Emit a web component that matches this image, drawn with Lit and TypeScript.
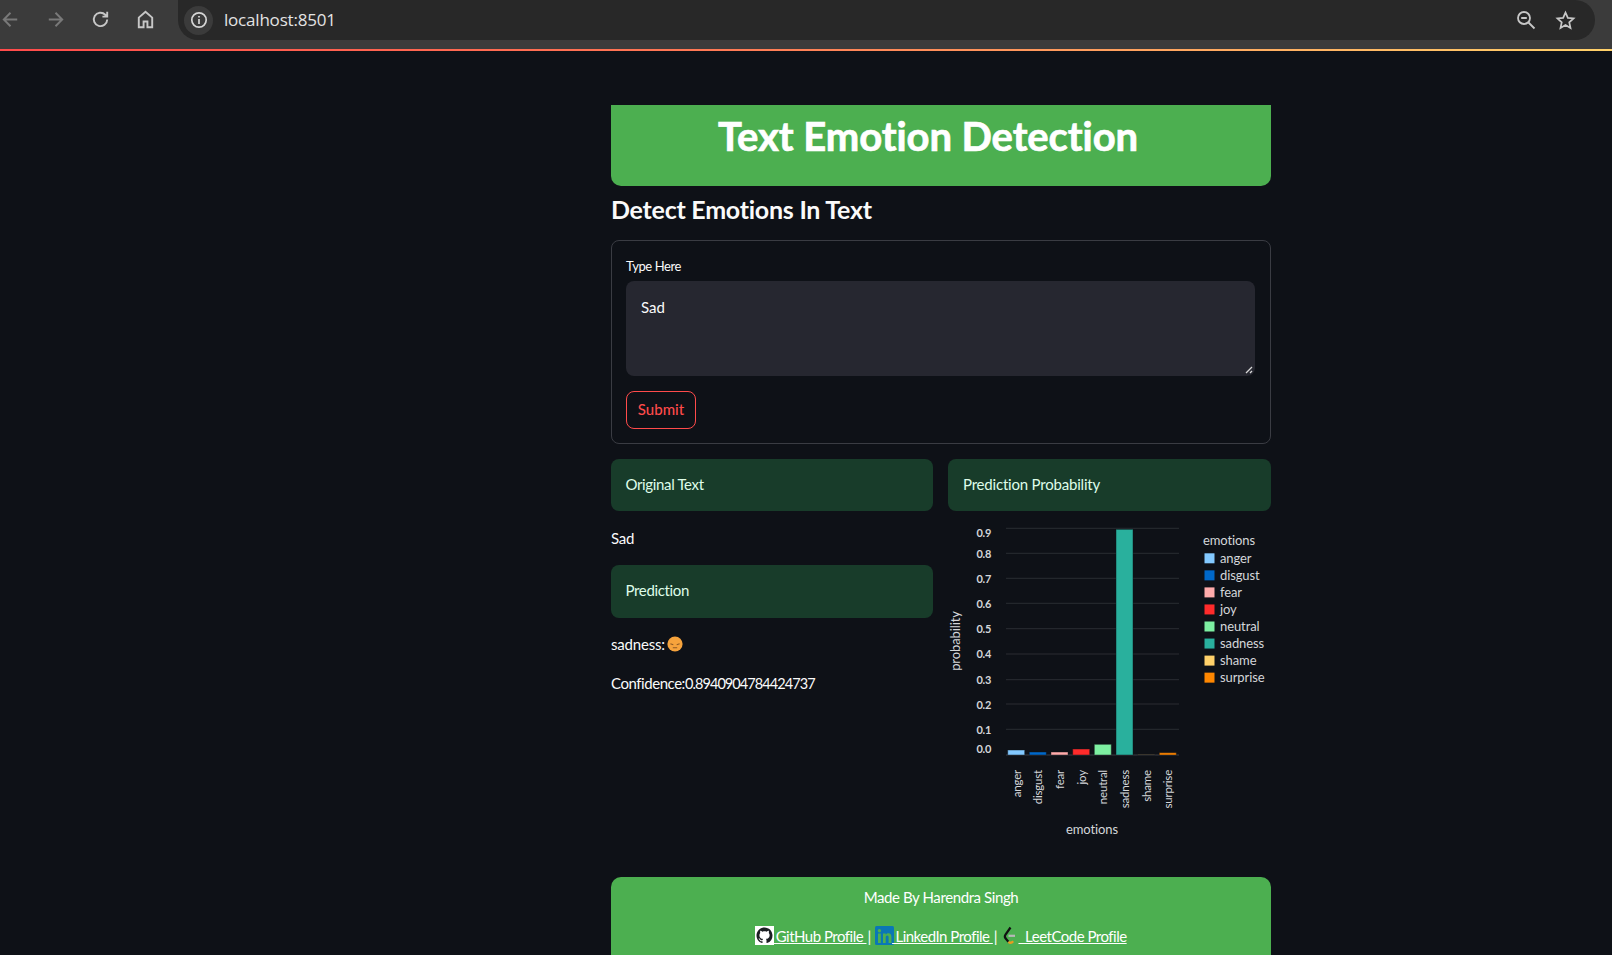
import { LitElement, css, html, svg } from "lit";
import { customElement } from "lit/decorators.js";

const bars = [
  { name: "anger", color: "#83c9ff", x: 1007.7, top: 750 },
  { name: "disgust", color: "#0068c9", x: 1029.3, top: 752 },
  { name: "fear", color: "#ffabab", x: 1051, top: 752 },
  { name: "joy", color: "#ff2b2b", x: 1072.7, top: 749 },
  { name: "neutral", color: "#7defa1", x: 1094.3, top: 744.3 },
  { name: "sadness", color: "#29b09d", x: 1116, top: 529.3 },
  { name: "shame", color: "#ffd16a", x: 1137.7, top: 754.8 },
  { name: "surprise", color: "#ff8700", x: 1159.3, top: 752.7 },
];

const grid = [528.3, 553.3, 578.3, 603.3, 628.7, 654, 679.7, 704, 729.3];
const ticks = [
  ["0.9", 532.5],
  ["0.8", 553.5],
  ["0.7", 578.5],
  ["0.6", 603.5],
  ["0.5", 629],
  ["0.4", 654],
  ["0.3", 679.5],
  ["0.2", 704.5],
  ["0.1", 730],
  ["0.0", 749],
] as const;

@customElement("app-root")
export class AppRoot extends LitElement {
  static styles = css`
    :host {
      display: block;
      height: 955px;
      overflow: hidden;
      background: #0e1117;
      color: #fafafa;
      font-family: "Lato", "Noto Sans", sans-serif;
      font-size: 15px;
      letter-spacing: -0.35px;
      font-variant-ligatures: none;
    }

    .chrome {
      display: flex;
      align-items: flex-start;
      height: 49px;
      background: #3b3b3b;
      color: #c7c7c7;
    }

    .nav {
      display: flex;
      align-items: center;
      gap: 22px;
      width: 178px;
      height: 38px;
      margin-left: -1px;
      flex: none;
    }

    .nav svg {
      flex: none;
      width: 23px;
      height: 23px;
    }

    .nav .dim {
      color: #797979;
    }

    .omnibox {
      display: flex;
      align-items: center;
      width: 1417px;
      height: 40px;
      margin-left: 1px;
      background: #282828;
      border-radius: 0 20px 20px 20px;
      box-sizing: border-box;
      padding: 0 19px 0 6px;
    }

    .site-info {
      display: flex;
      align-items: center;
      justify-content: center;
      width: 29px;
      height: 29px;
      margin-right: 11px;
      border-radius: 50%;
      background: #3b3b3b;
    }

    .url {
      flex: 1;
      margin-bottom: 2px;
      font-family: "Open Sans", sans-serif;
      font-size: 17px;
      letter-spacing: -0.2px;
      color: #e3e3e3;
    }

    .omni-icons {
      display: flex;
      gap: 19px;
      align-items: center;
    }

    .progress {
      height: 2px;
      background: linear-gradient(90deg, #ff4b4b, #ff7a55 45%, #ffd16a);
    }

    main {
      width: 660px;
      margin: 54px 0 0 611px;
    }

    .title {
      height: 81px;
      box-sizing: border-box;
      margin: 0;
      padding: 0 26px 0 0;
      background: #4caf50;
      border-radius: 0 0 10px 10px;
      color: #fff;
      font-size: 40px;
      font-weight: 700;
      letter-spacing: -0.08px;
      -webkit-text-stroke: 0.7px #fff;
      line-height: 62px;
      text-align: center;
    }

    .subtitle {
      margin: 0;
      height: 54px;
      font-size: 25px;
      font-weight: 700;
      letter-spacing: -0.25px;
      line-height: 46px;
    }

    form {
      display: block;
      height: 204px;
      box-sizing: border-box;
      padding: 17px 15px 15px 14px;
      border: 1px solid #3a3c43;
      border-radius: 8px;
    }

    label {
      display: block;
      height: 23px;
      font-size: 13px;
      letter-spacing: -0.4px;
      line-height: 16px;
    }

    .textarea {
      position: relative;
      height: 95px;
      box-sizing: border-box;
      padding: 14px 15px;
      background: #262730;
      border-radius: 8px;
      line-height: 24px;
      letter-spacing: 0;
    }

    .grip {
      position: absolute;
      right: 2px;
      bottom: 2px;
      width: 8px;
      height: 8px;
    }

    button {
      display: block;
      width: 70px;
      height: 38px;
      margin-top: 15px;
      padding: 0 0 2px;
      background: transparent;
      border: 1px solid #ff4b4b;
      border-radius: 8px;
      color: #ff4b4b;
      font: inherit;
      font-weight: 500;
      font-size: 15px;
      letter-spacing: 0;
    }

    .columns {
      display: grid;
      grid-template-columns: 322px 323px;
      gap: 15px;
      margin-top: 15px;
    }

    .alert {
      height: 52px;
      box-sizing: border-box;
      padding: 0 15px 0 14.5px;
      background: #183c2a;
      border-radius: 8px;
      color: #dffde9;
      line-height: 51px;
    }

    .alert.tall {
      height: 53px;
      line-height: 51px;
    }

    .right .alert {
      padding-left: 15px;
      letter-spacing: -0.2px;
    }

    .left p {
      margin: 0;
      line-height: 24px;
    }

    .left .sad {
      margin: 14.5px 0 15.5px;
      letter-spacing: -0.2px;
    }

    .left .emotion {
      display: flex;
      align-items: center;
      gap: 2px;
      margin: 14px 0 15px;
      letter-spacing: -0.2px;
    }

    .confidence {
      letter-spacing: -0.45px;
    }

    .confidence span {
      font-size: 14.5px;
      letter-spacing: -0.92px;
    }

    .emoji {
      width: 16px;
      height: 16px;
    }

    .chart {
      display: block;
      width: 340px;
      height: 340px;
      margin: 4px 0 0 -8px;
    }

    .chart text {
      fill: #d4d6da;
      font-family: "Lato", "Noto Sans", sans-serif;
      font-size: 11.5px;
      letter-spacing: -0.2px;
    }

    .chart .tick {
      font-size: 11px;
      font-weight: 700;
      letter-spacing: -0.3px;
    }

    .chart .big {
      font-size: 13px;
      letter-spacing: -0.1px;
    }

    .footer {
      height: 100px;
      margin-top: 22px;
      padding-top: 10px;
      box-sizing: border-box;
      background: #4caf50;
      border-radius: 10px 10px 0 0;
      text-align: center;
      color: #fff;
    }

    .footer p {
      margin: 0;
      height: 39px;
      line-height: 20px;
      letter-spacing: -0.4px;
    }

    .links {
      display: flex;
      justify-content: center;
      align-items: center;
      white-space: pre;
      letter-spacing: -0.5px;
    }

    .links .sep {
      margin: 0 1px;
    }

    .links a span {
      margin-left: -2px;
    }

    a {
      display: inline-flex;
      align-items: center;
      color: #fff;
      text-decoration: underline;
    }

    .links svg {
      width: 19px;
      height: 19px;
      flex: none;
    }
  `;

  private renderChart() {
    return html`<svg class="chart" viewBox="940 515 340 340">
      ${grid.map(
        (y) => svg`<line x1="1006" x2="1179" y1=${y} y2=${y} stroke="#2a2d33" stroke-width="1"></line>`,
      )}
      <line x1="1006" x2="1179" y1="755" y2="755" stroke="#3a3d44"></line>
      ${ticks.map(
        ([t, y]) => svg`<text class="tick" x="991" y=${y + 4} text-anchor="end">${t}</text>`,
      )}
      ${bars.map(
        (b) => svg`
          <rect x=${b.x} y=${b.top} width="17" height=${755 - b.top} fill=${b.color} stroke="rgba(14,17,23,.45)" stroke-width="1"></rect>
          <text transform="translate(${b.x + 13} 770) rotate(-90)" text-anchor="end">${b.name}</text>`,
      )}
      <text class="big" transform="translate(960 641) rotate(-90)" text-anchor="middle">probability</text>
      <text class="big" x="1092" y="834" text-anchor="middle">emotions</text>
      <text class="big" x="1203" y="545">emotions</text>
      ${bars.map((b, i) => {
        const y = 558.3 + i * 17.05;
        return svg`
          <rect x="1204.5" y=${y - 5} width="10" height="10" fill=${b.color}></rect>
          <text class="big" x="1220" y=${y + 4.5}>${b.name}</text>`;
      })}
    </svg>`;
  }

  render() {
    return html`
      <div class="chrome">
        <div class="nav">
          <svg class="dim" viewBox="0 0 24 24" fill="none" stroke="currentColor" stroke-width="2"><path d="M19 12H5M12 5l-7 7 7 7"/></svg>
          <svg class="dim" viewBox="0 0 24 24" fill="none" stroke="currentColor" stroke-width="2"><path d="M5 12h14M12 5l7 7-7 7"/></svg>
          <svg viewBox="0 0 24 24" fill="none" stroke="currentColor" stroke-width="2"><path d="M19 12a7 7 0 1 1-2-5l2 2M19 4v5h-5"/></svg>
          <svg viewBox="0 0 24 24" fill="none" stroke="currentColor" stroke-width="2"><path d="M5 20V10l7-6 7 6v10h-5v-6h-4v6z"/></svg>
        </div>
        <div class="omnibox">
          <span class="site-info">
            <svg width="18" height="18" viewBox="0 0 18 18" fill="none" stroke="#d5d5d5" stroke-width="1.7"><circle cx="9" cy="9" r="7.2"/><path d="M9 8v5M9 5v1.6"/></svg>
          </span>
          <span class="url">localhost:8501</span>
          <span class="omni-icons">
            <svg width="20" height="20" viewBox="0 0 20 20" fill="none" stroke="#c7c7c7" stroke-width="1.8"><circle cx="8" cy="8" r="6"/><path d="M5.2 8h5.6M12.5 12.5l6 6"/></svg>
            <svg width="21" height="21" viewBox="0 0 24 24" fill="none" stroke="#c7c7c7" stroke-width="2"><path d="M12 3l2.7 6 6.500.7-4.900 4.400 1.400 6.400L12 17.200l-5.700 3.300 1.400-6.400L2.800 9.700 9.300 9z"/></svg>
          </span>
        </div>
      </div>
      <div class="progress"></div>
      <main>
        <h1 class="title">Text Emotion Detection</h1>
        <h2 class="subtitle">Detect Emotions In Text</h2>
        <form>
          <label>Type Here</label>
          <div class="textarea">
            Sad
            <svg class="grip" viewBox="0 0 8 8" stroke="#d8d8d8" stroke-width="1.300"><path d="M1 7l6-6M5 7l2-2"/></svg>
          </div>
          <button type="button">Submit</button>
        </form>
        <div class="columns">
          <div class="left">
            <div class="alert">Original Text</div>
            <p class="sad">Sad</p>
            <div class="alert tall">Prediction</div>
            <p class="emotion">
              sadness:
              <svg class="emoji" viewBox="0 0 16 16">
                <circle cx="8" cy="8" r="7.600" fill="#f6a33c"/>
                <path d="M3.400 7.800l2.900.9M12.600 7.800l-2.900.9M5.800 11.800h4.400" stroke="#8f5a24" stroke-width="1.100" fill="none"/>
              </svg>
            </p>
            <p class="confidence">Confidence:<span>0.8940904784424737</span></p>
          </div>
          <div class="right">
            <div class="alert">Prediction Probability</div>
            ${this.renderChart()}
          </div>
        </div>
        <footer class="footer">
          <p>Made By Harendra Singh</p>
          <div class="links">
            <a href="#">
              <svg viewBox="0 0 19 19"><rect width="19" height="19" fill="#fff"/><path transform="translate(1.500 1.500)" fill="#1b1f23" d="M8 0C3.580 0 0 3.580 0 8c0 3.540 2.290 6.530 5.470 7.590.4.070.55-.17.55-.38 0-.19-.01-.82-.01-1.490-2.010.37-2.530-.49-2.690-.94-.09-.23-.48-.94-.82-1.130-.28-.15-.68-.52-.01-.53.630-.01 1.080.58 1.230.82.720 1.210 1.870.87 2.330.66.070-.52.280-.87.510-1.070-1.780-.2-3.640-.89-3.640-3.950 0-.87.310-1.590.820-2.150-.08-.2-.36-1.020.080-2.120 0 0 .670-.21 2.200.82.640-.18 1.320-.27 2-.27s1.360.09 2 .27c1.530-1.040 2.200-.82 2.200-.82.440 1.100.160 1.920.080 2.120.510.56.820 1.270.820 2.150 0 3.070-1.870 3.750-3.650 3.950.290.25.540.730.540 1.480 0 1.070-.01 1.930-.01 2.200 0 .21.150.46.550.38A8.013 8.013 0 0 0 16 8c0-4.420-3.580-8-8-8z"/></svg>
              <span> GitHub Profile </span>
            </a>
            <span class="sep">| </span>
            <a href="#">
              <svg viewBox="0 0 19 19"><rect width="19" height="19" rx="1.500" fill="#0a77b5"/><rect x="3" y="7.500" width="2.800" height="9.500" fill="#4caf50"/><circle cx="4.400" cy="4.800" r="1.700" fill="#4caf50"/><path d="M8 7.500h2.700v1.300c.5-.9 1.500-1.500 2.700-1.500 2.200 0 3 1.400 3 3.700V17h-2.800v-5.500c0-1.200-.4-1.900-1.400-1.900s-1.500.8-1.500 1.900V17H8z" fill="#4caf50"/></svg>
              <span> LinkedIn Profile </span>
            </a>
            <span class="sep">| </span>
            <a href="#">
              <svg viewBox="0 0 19 19" fill="none" stroke-width="2.200"><path d="M9.500 1.500L4.500 8.500c-1 1.500-.8 3 .4 4.300l2.500 3" stroke="#111"/><path d="M7.400 15.800c1.500 1.200 3.500 1 4.800-.5" stroke="#e89b20"/><path d="M7.500 9.800h6.500" stroke="#b8b8b8"/></svg>
              <span>  LeetCode Profile</span>
            </a>
          </div>
        </footer>
      </main>
    `;
  }
}
